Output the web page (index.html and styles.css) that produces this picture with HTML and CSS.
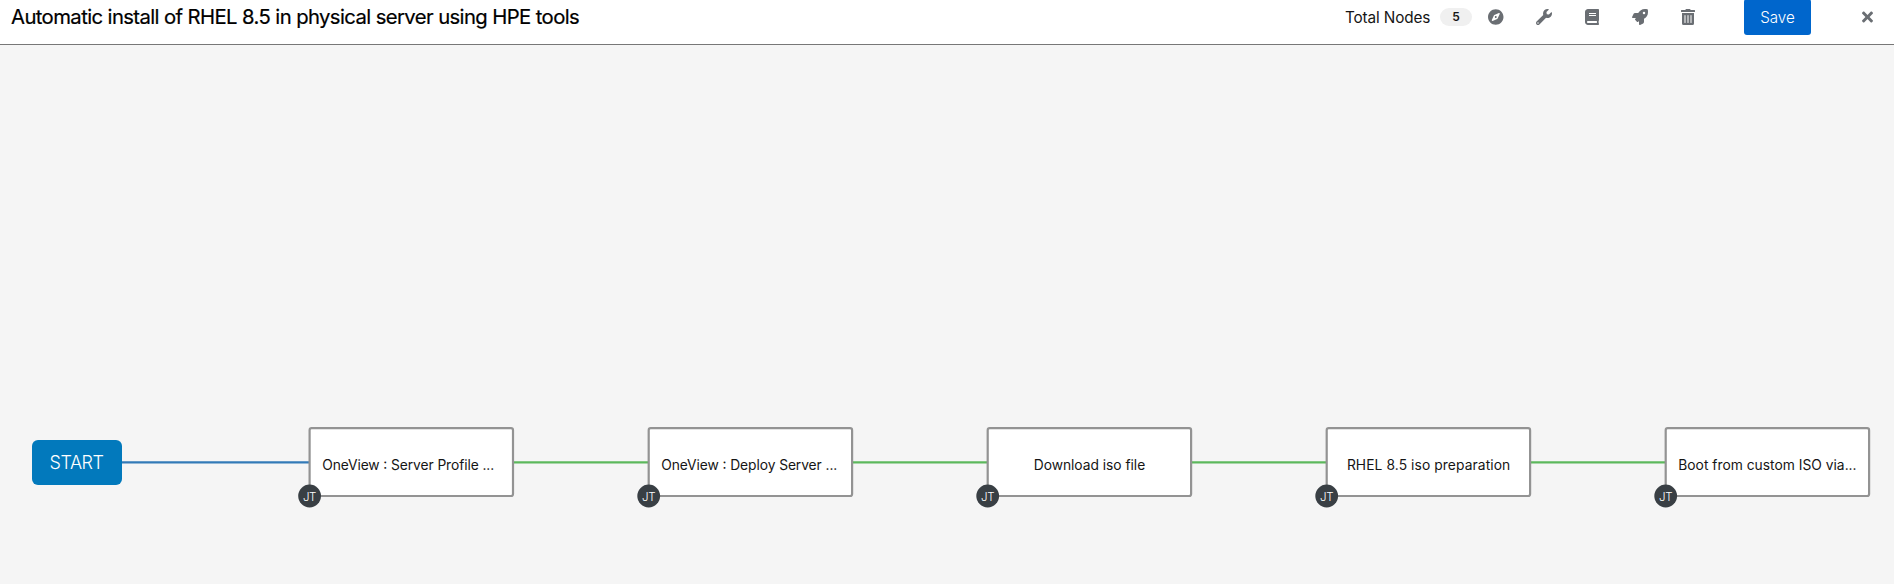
FILE: index.html
```html
<!DOCTYPE html>
<html lang="en">
<head>
<meta charset="utf-8">
<title>Workflow Visualizer</title>
<link rel="stylesheet" href="styles.css">
</head>
<body>
<header class="toolbar">
  <h1 class="title">Automatic install of RHEL 8.5 in physical server using HPE tools</h1>
  <div class="actions">
    <span class="total">Total Nodes</span>
    <span class="badge">5</span>
    <button class="icon-btn" aria-label="Toggle legend"><svg class="icon" viewBox="0 0 496 512"><path d="M225.38 233.37c-12.5 12.5-12.5 32.76 0 45.25 12.49 12.5 32.76 12.5 45.25 0 12.5-12.5 12.5-32.76 0-45.25-12.5-12.49-32.76-12.49-45.25 0zM248 8C111.03 8 0 119.03 0 256s111.03 248 248 248 248-111.03 248-248S384.97 8 248 8zm126.14 148.05L308.17 300.4a31.938 31.938 0 0 1-15.77 15.77l-144.34 65.97c-16.65 7.61-33.81-9.55-26.2-26.2l65.98-144.35a31.938 31.938 0 0 1 15.77-15.77l144.34-65.97c16.65-7.6 33.8 9.55 26.19 26.2z"/></svg></button>
    <button class="icon-btn" aria-label="Toggle tools"><svg class="icon" viewBox="0 0 512 512"><path d="M507.73 109.1c-2.24-9.03-13.54-12.09-20.12-5.51l-74.36 74.36-67.88-11.31-11.31-67.88 74.36-74.36c6.62-6.62 3.43-17.9-5.66-20.16-47.38-11.74-99.55.91-136.58 37.93-39.64 39.64-50.55 97.1-34.05 147.2L18.74 402.76c-24.99 24.99-24.99 65.51 0 90.5 24.99 24.99 65.51 24.99 90.5 0l213.21-213.21c50.12 16.71 107.47 5.68 147.37-34.22 37.07-37.07 49.7-89.32 37.91-136.73zM64 472c-13.25 0-24-10.75-24-24 0-13.26 10.75-24 24-24s24 10.74 24 24c0 13.25-10.75 24-24 24z"/></svg></button>
    <button class="icon-btn" aria-label="Documentation"><svg class="icon" viewBox="0 0 448 512"><path d="M448 360V24c0-13.3-10.7-24-24-24H96C43 0 0 43 0 96v320c0 53 43 96 96 96h328c13.3 0 24-10.7 24-24v-16c0-7.5-3.5-14.3-8.9-18.7-4.2-15.4-4.2-59.3 0-74.7 5.4-4.3 8.9-11.1 8.9-18.6zM128 134c0-3.3 2.7-6 6-6h212c3.3 0 6 2.7 6 6v20c0 3.3-2.7 6-6 6H134c-3.3 0-6-2.7-6-6v-20zm0 64c0-3.3 2.7-6 6-6h212c3.3 0 6 2.7 6 6v20c0 3.3-2.7 6-6 6H134c-3.3 0-6-2.7-6-6v-20zm253.4 250H96c-17.7 0-32-14.3-32-32 0-17.6 14.4-32 32-32h285.4c-1.9 17.1-1.9 46.9 0 64z"/></svg></button>
    <button class="icon-btn" aria-label="Launch"><svg class="icon" viewBox="0 0 512 512"><path d="M505.12 19.09c-1.19-5.53-6.66-11-12.21-12.19C460.72 0 435.51 0 410.41 0 307.18 0 245.27 55.2 199.05 128H94.84c-16.35.02-35.56 11.88-42.89 26.48L2.52 253.3A28.4 28.4 0 0 0 0 264a24 24 0 0 0 24 24h103.82l-22.48 22.47c-11.36 11.36-12.99 32.26 0 45.25l50.91 50.91c11.15 11.18 32.15 13.15 45.27 0L224 384.16V488a24 24 0 0 0 24 24 28.56 28.56 0 0 0 10.71-2.52l98.73-49.39c14.63-7.29 26.51-26.5 26.51-42.86V312.8c72.6-46.31 128.03-108.41 128.03-211.1.09-25.2.09-50.4-6.86-82.61zM384.04 168A40 40 0 1 1 424.05 128a40.02 40.02 0 0 1-40.01 40z"/></svg></button>
    <button class="icon-btn" aria-label="Delete all nodes"><svg class="icon" viewBox="0 0 448 512"><path d="M32 464a48 48 0 0 0 48 48h288a48 48 0 0 0 48-48V128H32zm272-256a16 16 0 0 1 32 0v224a16 16 0 0 1-32 0zm-96 0a16 16 0 0 1 32 0v224a16 16 0 0 1-32 0zm-96 0a16 16 0 0 1 32 0v224a16 16 0 0 1-32 0zM432 32H312l-9.4-18.7A24 24 0 0 0 281.1 0H166.8a23.72 23.72 0 0 0-21.4 13.3L136 32H16A16 16 0 0 0 0 48v32a16 16 0 0 0 16 16h416a16 16 0 0 0 16-16V48a16 16 0 0 0-16-16z"/></svg></button>
    <button class="save">Save</button>
    <button class="icon-btn close" aria-label="Close"><svg class="icon" viewBox="0 0 352 512"><path d="M242.72 256l100.07-100.07c12.28-12.28 12.28-32.19 0-44.48l-22.24-22.24c-12.28-12.28-32.19-12.28-44.48 0L176 189.28 75.93 89.21c-12.28-12.28-32.19-12.28-44.48 0L9.21 111.45c-12.28 12.28-12.28 32.19 0 44.48L109.28 256 9.21 356.07c-12.28 12.28-12.28 32.19 0 44.48l22.24 22.24c12.28 12.28 32.2 12.28 44.48 0L176 322.72l100.07 100.07c12.28 12.28 32.2 12.28 44.48 0l22.24-22.24c12.28-12.28 12.28-32.19 0-44.48L242.72 256z"/></svg></button>
  </div>
</header>
<main class="canvas">
  <svg class="graph" width="1894" height="539" viewBox="0 45 1894 539">
    <g class="links">
      <path class="link link-always" d="M122 462.3H309"/>
      <path class="link" d="M514 462.3H648"/>
      <path class="link" d="M853 462.3H987"/>
      <path class="link" d="M1192 462.3H1326"/>
      <path class="link" d="M1531 462.3H1665"/>
    </g>
    <g>
      <rect class="start" x="32" y="440" width="90" height="45" rx="6"/>
      <text class="start-label" x="49.5" y="469" textLength="54.5">START</text>
    </g>
    <g transform="translate(309.6 428.2)">
      <rect class="node" width="203.4" height="67.8" rx="2"/>
      <text class="label" x="12.6" y="41.6" textLength="172">OneView : Server Profile ...</text>
      <circle class="type" cx="0" cy="67.8" r="11.4"/>
      <text class="type-label" x="-6.6" y="72.8" textLength="13.4">JT</text>
    </g>
    <g transform="translate(648.7 428.2)">
      <rect class="node" width="203.4" height="67.8" rx="2"/>
      <text class="label" x="12.6" y="41.6" textLength="176">OneView : Deploy Server ...</text>
      <circle class="type" cx="0" cy="67.8" r="11.4"/>
      <text class="type-label" x="-6.6" y="72.8" textLength="13.4">JT</text>
    </g>
    <g transform="translate(987.7 428.2)">
      <rect class="node" width="203.4" height="67.8" rx="2"/>
      <text class="label" x="46" y="41.6" textLength="111.5">Download iso file</text>
      <circle class="type" cx="0" cy="67.8" r="11.4"/>
      <text class="type-label" x="-6.6" y="72.8" textLength="13.4">JT</text>
    </g>
    <g transform="translate(1326.7 428.2)">
      <rect class="node" width="203.4" height="67.8" rx="2"/>
      <text class="label" x="20.2" y="41.6" textLength="163.3">RHEL 8.5 iso preparation</text>
      <circle class="type" cx="0" cy="67.8" r="11.4"/>
      <text class="type-label" x="-6.6" y="72.8" textLength="13.4">JT</text>
    </g>
    <g transform="translate(1665.7 428.2)">
      <rect class="node" width="203.4" height="67.8" rx="2"/>
      <text class="label" x="12.6" y="41.6" textLength="178.3">Boot from custom ISO via...</text>
      <circle class="type" cx="0" cy="67.8" r="11.4"/>
      <text class="type-label" x="-6.6" y="72.8" textLength="13.4">JT</text>
    </g>
  </svg>
</main>
</body>
</html>
```
FILE: styles.css
```css
* { box-sizing: border-box; }
body {
  margin: 0;
  height: 584px;
  display: flex;
  flex-direction: column;
  overflow: hidden;
  background: #f5f5f5;
  color: #151515;
  font-family: Inter, "Open Sans", sans-serif;
}
.toolbar {
  display: flex;
  justify-content: space-between;
  height: 45px;
  padding: 0 11px;
  background: #fff;
  border-bottom: 1px solid #777;
}
.title {
  margin: 0;
  color: #000;
  font-size: 20.3px;
  font-weight: 400;
  line-height: 34px;
  letter-spacing: -0.6px;
  white-space: nowrap;
  -webkit-text-stroke: 0.2px #000;
}
.actions {
  display: flex;
  align-items: center;
  height: 34px;
}
.total {
  width: 95px;
  font-size: 15.3px;
  letter-spacing: -0.12px;
  white-space: nowrap;
}
.badge {
  width: 32px;
  height: 18px;
  border-radius: 9px;
  background: #f0f0f0;
  font-size: 12px;
  font-weight: 600;
  line-height: 18px;
  text-align: center;
}
.icon-btn {
  display: flex;
  align-items: center;
  justify-content: center;
  width: 48px;
  height: 34px;
  padding: 0;
  border: 0;
  background: none;
  color: #6a6e73;
}
.icon {
  height: 16px;
  fill: currentColor;
}
.save {
  align-self: flex-start;
  width: 67px;
  height: 36px;
  margin: -1px 32px 0;
  padding: 1px 0 0;
  border: 0;
  border-radius: 3px;
  background: #06c;
  color: #fff;
  font-family: Inter, sans-serif;
  font-size: 15.2px;
  font-weight: 300;
}
.close { margin-right: -8px; }
.canvas { flex: 1; }
.graph { display: block; }
.link { fill: none; stroke: #5cb85c; stroke-width: 2.3; }
.link-always { stroke: #337ab7; }
.start { fill: #0279bc; }
.start-label { fill: #fff; font-size: 18px; font-weight: 300; }
.node { fill: #fff; stroke: #939393; stroke-width: 2.2; }
.label { fill: #151515; font-size: 13.8px; font-weight: 400; }
.type { fill: #393f44; }
.type-label { fill: #fff; font-size: 11.5px; font-weight: 300; }
```
